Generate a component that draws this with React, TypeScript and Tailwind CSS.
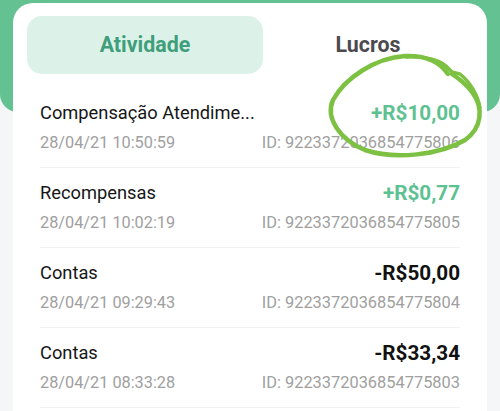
import React from "react";

const rows = [
  { title: "Compensação Atendime...", date: "28/04/21 10:50:59", amount: "+R$10,00", id: "ID: 9223372036854775806", pos: true },
  { title: "Recompensas", date: "28/04/21 10:02:19", amount: "+R$0,77", id: "ID: 9223372036854775805", pos: true },
  { title: "Contas", date: "28/04/21 09:29:43", amount: "-R$50,00", id: "ID: 9223372036854775804", pos: false },
  { title: "Contas", date: "28/04/21 08:33:28", amount: "-R$33,34", id: "ID: 9223372036854775803", pos: false },
];

export default function App() {
  return (
    <div className="relative w-[500px] h-[411px] overflow-hidden bg-[#f5f6f8]" style={{ fontFamily: "Roboto, 'Noto Sans', sans-serif" }}>
      <div className="absolute left-0 top-0 w-[500px] h-[112px] bg-[#63c192] rounded-b-[18px]" />
      <div className="relative mx-[13px] mt-[3px] h-[420px] bg-white rounded-t-[20px] px-[14px] pt-[13px]">
        <div className="flex h-[58px]">
          <div className="w-[236px] rounded-[15px] bg-[#dcf2e9] flex items-center justify-center text-[21.4px] font-bold text-[#3f9e7b]">Atividade</div>
          <div className="flex-1 flex items-center justify-center text-[21.4px] font-bold text-[#4b4b4e]">Lucros</div>
        </div>
        <div className="px-[13px] pt-[14px]">
          {rows.map((r, i) => (
            <div key={i} className="h-[80px] border-b border-[#f1f1f3] flex justify-between pt-[13px]">
              <div className="flex flex-col">
                <span className="text-[18.3px] leading-[24px] text-[#161616]">{r.title}</span>
                <span className="mt-[8px] text-[16.3px] leading-[20px] text-[#a0a0a0]">{r.date}</span>
              </div>
              <div className="flex flex-col items-end">
                <span className={`text-[20.7px] leading-[24px] font-bold ${r.pos ? "text-[#5dc192]" : "text-[#111111]"}`}>{r.amount}</span>
                <span className="mt-[8px] text-[16.4px] leading-[20px] text-[#a0a0a0]">{r.id}</span>
              </div>
            </div>
          ))}
        </div>
      </div>
      <svg className="absolute left-0 top-0 pointer-events-none" width="500" height="411" viewBox="0 0 500 411" fill="none">
        <path
          d="M448 74 C440 62 425 55 405 56 C375 58 345 78 333 100 C325 118 340 140 365 150 C395 160 440 155 465 140 C482 128 484 108 472 92 C466 84 458 78 452 74"
          stroke="#7dc143"
          strokeWidth="4.5"
          strokeLinecap="round"
        />
        <path
          d="M406 57 C425 56 440 60 446 66 L452 72 L460 74 C470 82 478 95 480 108"
          stroke="#7dc143"
          strokeWidth="3.5"
          strokeLinecap="round"
        />
      </svg>
    </div>
  );
}
